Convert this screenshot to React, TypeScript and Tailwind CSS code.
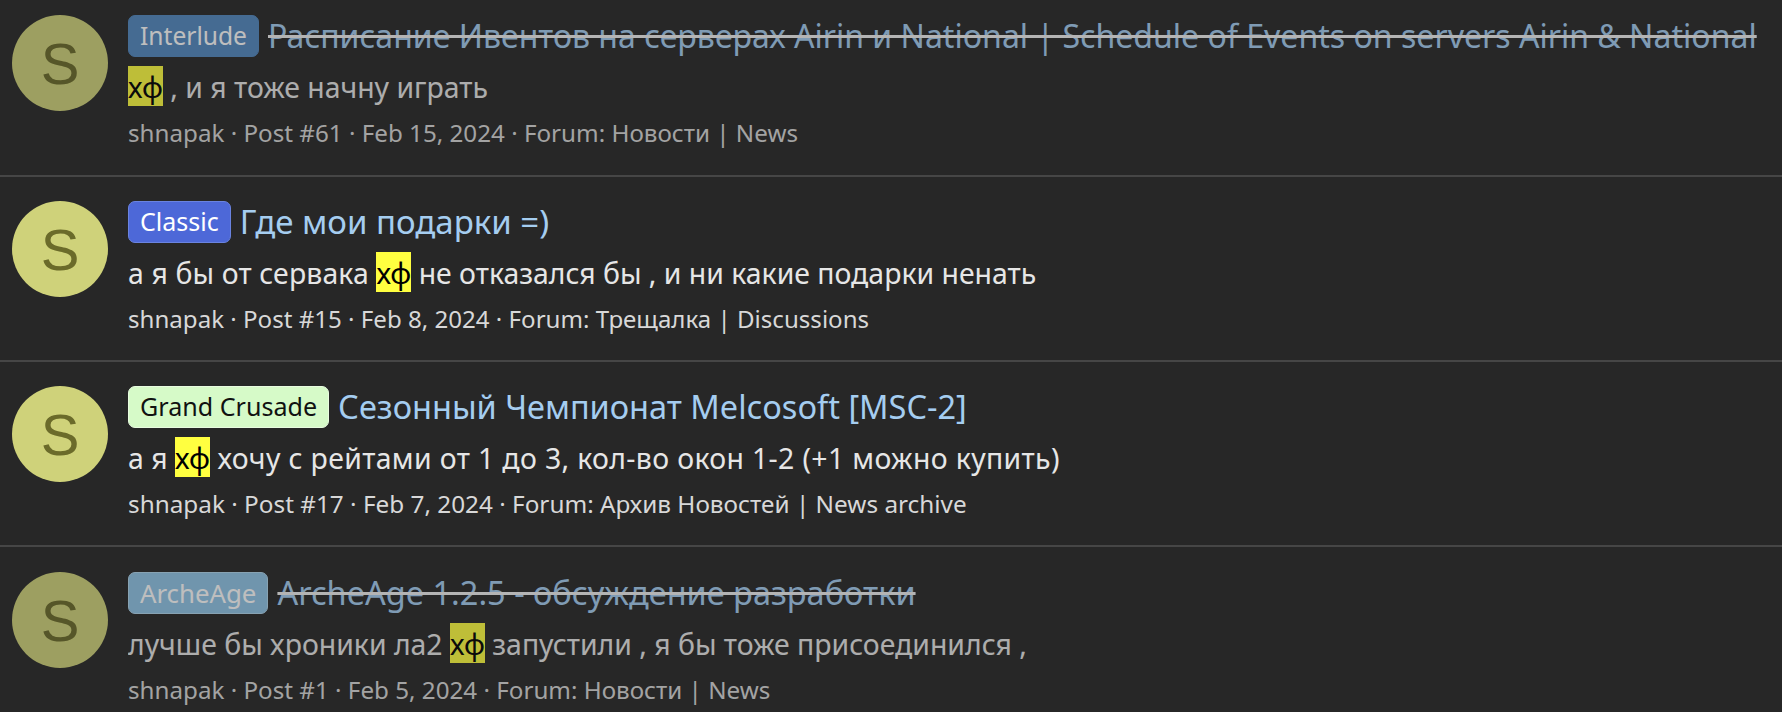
const rows = [
  {
    faded: true, struck: true, badge: "Interlude", badgeCls: "bg-[#5288c0] border-[#5288c0] text-white text-[24.6px]",
    titleCls: "text-[32.06px]", beforeCls: "", bodyCls: "", metaCls: "text-[24.2px]",
    title: "Расписание Ивентов на серверах Airin и National | Schedule of Events on servers Airin & National",
    before: "", after: " , и я тоже начну играть",
    meta: "shnapak · Post #61 · Feb 15, 2024 · Forum: Новости | News",
    pad: "pt-[15px]", h: "h-[177px]",
  },
  {
    faded: false, struck: false, badge: "Classic", badgeCls: "bg-[#4d68d8] border-[#6a83e0] text-white text-[25px]",
    titleCls: "text-[33px]", beforeCls: "tracking-[0.13px]", bodyCls: "", metaCls: "text-[24.1px]",
    title: "Где мои подарки =)",
    before: "а я бы от сервака ", after: " не отказался бы , и ни какие подарки ненать",
    meta: "shnapak · Post #15 · Feb 8, 2024 · Forum: Трещалка | Discussions",
    pad: "pt-[24px]", h: "h-[185px]",
  },
  {
    faded: false, struck: false, badge: "Grand Crusade", badgeCls: "bg-[#d6fac8] border-[#e8fce0] text-[#111111] text-[25.1px]",
    titleCls: "text-[32.5px]", beforeCls: "", bodyCls: "tracking-[0.36px]", metaCls: "text-[24.32px]",
    title: "Сезонный Чемпионат Melcosoft [MSC-2]",
    before: "а я ", after: " хочу с рейтами от 1 до 3, кол-во окон 1-2 (+1 можно купить)",
    meta: "shnapak · Post #17 · Feb 7, 2024 · Forum: Архив Новостей | News archive",
    pad: "pt-[24px]", h: "h-[185px]",
  },
  {
    faded: true, struck: true, badge: "ArcheAge", badgeCls: "bg-[#8fc4e6] border-[#b0d6ee] text-white text-[25.8px]",
    titleCls: "text-[32.5px]", beforeCls: "", bodyCls: "", metaCls: "text-[24.2px]",
    title: "ArcheAge 1.2.5 - обсуждение разработки",
    before: "лучше бы хроники ла2 ", after: " запустили , я бы тоже присоединился ,",
    meta: "shnapak · Post #1 · Feb 5, 2024 · Forum: Новости | News",
    pad: "pt-[25px]", h: "h-[185px]",
  },
];

export default function App() {
  return (
    <div className="h-[712px] overflow-hidden bg-[#272727] font-['Noto_Sans',sans-serif]">
      {rows.map((r, i) => (
        <div key={i} className={`flex items-start border-b-2 border-[#464646] pl-[12px] ${r.pad} ${r.h} last:border-b-0`}>
          <div className={r.faded ? "opacity-70" : ""}>
            <div className="flex h-[96px] w-[96px] items-center justify-center rounded-full bg-[#cfd27a] font-['Liberation_Sans',sans-serif] text-[58px] text-[#6b6b2a]">
              S
            </div>
          </div>
          <div className={`ml-[20px] min-w-0 flex-1 ${r.faded ? "opacity-70" : ""}`}>
            <div className="flex h-[42px] items-center whitespace-nowrap">
              <span className={`flex h-[42px] items-center rounded-[7px] border px-[11px] ${r.badgeCls}`}>{r.badge}</span>
              <span className={`ml-[9px] text-[#a5cdf0] ${r.titleCls} ${r.struck ? "line-through decoration-[#f0f0f0] decoration-[2.5px]" : ""}`}>{r.title}</span>
            </div>
            <div className="mt-[9px] h-[40px] whitespace-pre text-[28.4px] leading-[43px] text-[#e6e6e6]">
              <span className={r.beforeCls}>{r.before}</span>
              <span className="inline-block h-[40px] bg-[#ffff40] align-top text-[#000000]">хф</span>
              <span className={r.bodyCls}>{r.after}</span>
            </div>
            <div className={`mt-[9px] whitespace-pre leading-[36px] text-[#d8d8d8] ${r.metaCls}`}>{r.meta}</div>
          </div>
        </div>
      ))}
    </div>
  );
}
